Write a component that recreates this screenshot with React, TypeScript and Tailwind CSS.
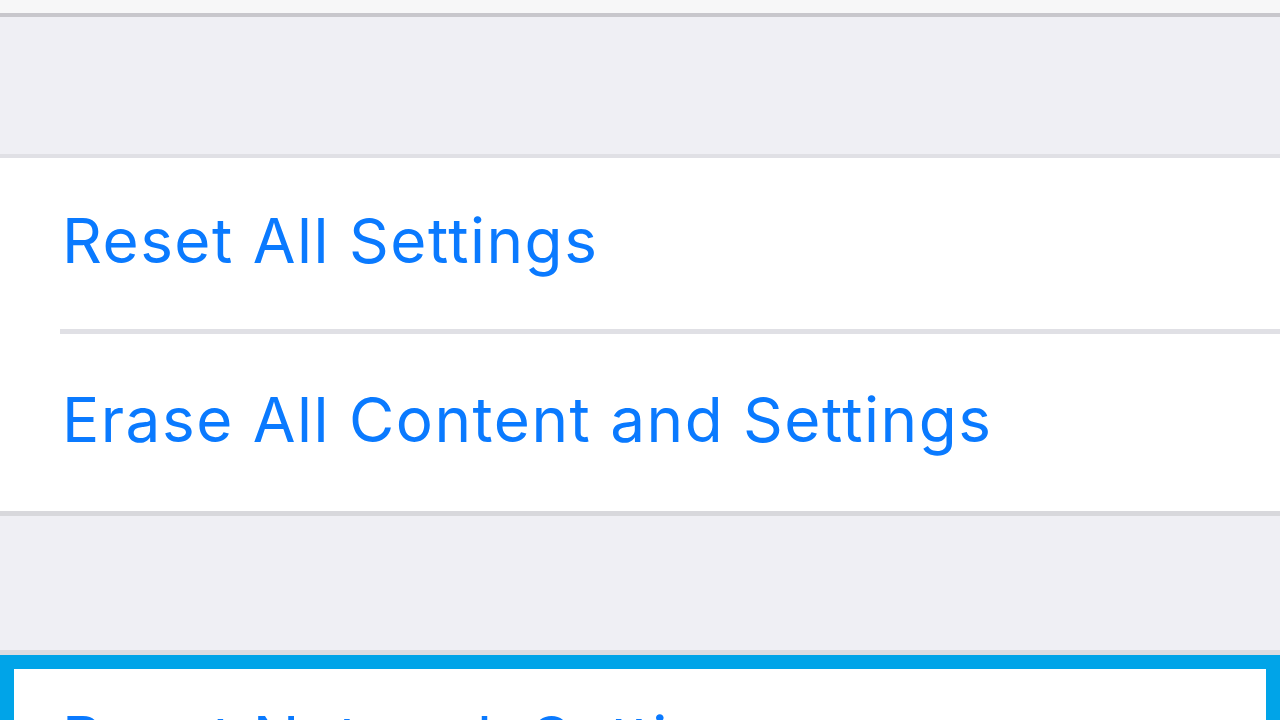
export default function App() {
  const font = { fontFamily: 'Inter, "Noto Sans", sans-serif' };
  return (
    <div className="w-[1280px] h-[720px] overflow-hidden flex flex-col bg-[#efeff4]" style={font}>
      <div className="h-[13px] bg-[#f7f7f8] shrink-0" />
      <div className="h-[4px] bg-[#c8c7cc] shrink-0" />
      <div className="h-[137px] bg-[#efeff4] shrink-0" />
      <div className="h-[4px] bg-[#e0e0e5] shrink-0" />
      <div className="h-[171px] bg-white shrink-0 flex items-center pl-[62px] pb-[6px]">
        <span className="text-[62px] leading-[75px] tracking-[1.5px] text-[#0a7aff]">Reset All Settings</span>
      </div>
      <div className="h-[5px] bg-white shrink-0 pl-[60px]">
        <div className="h-full bg-[#e0e0e5]" />
      </div>
      <div className="h-[177px] bg-white shrink-0 flex items-center pl-[62px] pb-[6px]">
        <span className="text-[62px] leading-[75px] tracking-[1.5px] text-[#0a7aff]">Erase All Content and Settings</span>
      </div>
      <div className="h-[5px] bg-[#d8d8dc] shrink-0" />
      <div className="h-[134px] bg-[#efeff4] shrink-0" />
      <div className="h-[5px] bg-[#dcdce1] shrink-0" />
      <div className="h-[200px] shrink-0 bg-white border-[14px] border-[#00a4e8] pl-[48px] pt-[32px]">
        <span className="text-[62px] leading-[75px] tracking-[1.5px] text-[#0a7aff] whitespace-nowrap">Reset Network Settings</span>
      </div>
    </div>
  );
}
